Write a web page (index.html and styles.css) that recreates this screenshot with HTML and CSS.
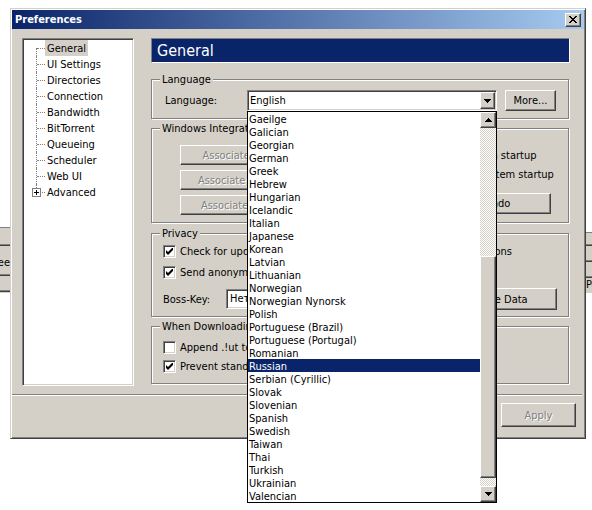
FILE: index.html
```html
<!DOCTYPE html>
<html lang="en">
<head>
  <meta charset="UTF-8">
  <title>Preferences</title>
  <link rel="stylesheet" href="styles.css">
</head>
<body>
  <div class="desktop">
    <!-- window behind the dialog, only its edges show -->
    <div class="bgwin">
      <div class="bg-left">
        <div class="bg-row bg-a"></div>
        <div class="bg-row bg-b"><span>Free</span></div>
        <div class="bg-row bg-c"></div>
      </div>
      <div class="bg-right">
        <div class="bg-row bg-ra"></div>
        <div class="bg-row bg-rb"></div>
        <div class="bg-row bg-rc"></div>
        <div class="bg-rd">Peers</div>
      </div>
    </div>

    <div class="dialog">
      <div class="titlebar">
        <span class="title">Preferences</span>
        <button class="btn close"><svg width="8" height="7" viewBox="0 0 8 7"><path d="M0 0h2v1h-2zM6 0h2v1h-2zM1 1h2v1h-2zM5 1h2v1h-2zM2 2h4v1h-4zM3 3h2v1h-2zM2 4h4v1h-4zM1 5h2v1h-2zM5 5h2v1h-2zM0 6h2v1h-2zM6 6h2v1h-2z" fill="#000"/></svg></button>
      </div>

      <div class="client">
        <div class="main">
          <ul class="tree">
            <li class="first"><span class="twig"></span><span class="tree-label sel">General</span></li>
            <li><span class="twig"></span><span class="tree-label">UI Settings</span></li>
            <li><span class="twig"></span><span class="tree-label">Directories</span></li>
            <li><span class="twig"></span><span class="tree-label">Connection</span></li>
            <li><span class="twig"></span><span class="tree-label">Bandwidth</span></li>
            <li><span class="twig"></span><span class="tree-label">BitTorrent</span></li>
            <li><span class="twig"></span><span class="tree-label">Queueing</span></li>
            <li><span class="twig"></span><span class="tree-label">Scheduler</span></li>
            <li><span class="twig"></span><span class="tree-label">Web UI</span></li>
            <li class="last"><span class="twig"><span class="plus"><svg width="7" height="7" viewBox="0 0 7 7"><path d="M1 3h5v1h-5zM3 1h1v5h-1z" fill="#000"/></svg></span></span><span class="tree-label">Advanced</span></li>
          </ul>

          <div class="panel">
            <div class="header">General</div>

            <div class="group g-lang">
              <div class="group-title">Language</div>
              <div class="lang-row">
                <span class="lang-label">Language:</span>
                <div class="combo">
                  <span class="combo-text">English</span>
                  <span class="btn combo-arrow"><svg width="7" height="4" viewBox="0 0 7 4"><path d="M0 0h7v1h-1v1h-1v1h-1v1h-1v-1h-1v-1h-1v-1h-1z" fill="#000"/></svg></span>
                  <div class="dropdown">
                    <ul class="options">
                      <li>Gaeilge</li>
                      <li>Galician</li>
                      <li>Georgian</li>
                      <li>German</li>
                      <li>Greek</li>
                      <li>Hebrew</li>
                      <li>Hungarian</li>
                      <li>Icelandic</li>
                      <li>Italian</li>
                      <li>Japanese</li>
                      <li>Korean</li>
                      <li>Latvian</li>
                      <li>Lithuanian</li>
                      <li>Norwegian</li>
                      <li>Norwegian Nynorsk</li>
                      <li>Polish</li>
                      <li>Portuguese (Brazil)</li>
                      <li>Portuguese (Portugal)</li>
                      <li>Romanian</li>
                      <li class="sel">Russian</li>
                      <li>Serbian (Cyrillic)</li>
                      <li>Slovak</li>
                      <li>Slovenian</li>
                      <li>Spanish</li>
                      <li>Swedish</li>
                      <li>Taiwan</li>
                      <li>Thai</li>
                      <li>Turkish</li>
                      <li>Ukrainian</li>
                      <li>Valencian</li>
                    </ul>
                    <div class="scrollbar">
                      <span class="btn sb-btn"><svg width="7" height="4" viewBox="0 0 7 4"><path d="M3 0h1v1h1v1h1v1h1v1h-7v-1h1v-1h1v-1h1z" fill="#000"/></svg></span>
                      <span class="sb-track sb-track-top"></span>
                      <span class="btn sb-thumb"></span>
                      <span class="sb-track sb-track-bot"></span>
                      <span class="btn sb-btn"><svg width="7" height="4" viewBox="0 0 7 4"><path d="M0 0h7v1h-1v1h-1v1h-1v1h-1v-1h-1v-1h-1v-1h-1z" fill="#000"/></svg></span>
                    </div>
                  </div>
                </div>
                <button class="btn more">More...</button>
              </div>
            </div>

            <div class="group g-win">
              <div class="group-title">Windows Integration</div>
              <div class="wi">
                <div class="wi-left">
                  <button class="btn off">Associate with .torrent files</button>
                  <button class="btn off">Associate with .btsearch files</button>
                  <button class="btn off">Associate with magnet URIs</button>
                </div>
                <div class="wi-right">
                  <label class="check-row"><span class="check"></span>Check association on startup</label>
                  <label class="check-row"><span class="check"></span>Start µTorrent on system startup</label>
                  <button class="btn undo">Install Undo</button>
                </div>
              </div>
            </div>

            <div class="group g-priv">
              <div class="group-title">Privacy</div>
              <div class="priv">
                <div class="priv-row">
                  <label class="check-row"><span class="check"><svg width="7" height="7" viewBox="0 0 7 7"><path d="M0 2L2 4L7-1V2L2 7L0 5Z" fill="#000"/></svg></span>Check for updates automatically</label>
                  <label class="check-row"><span class="check"></span>Update to beta versions</label>
                </div>
                <div class="priv-row">
                  <label class="check-row"><span class="check"><svg width="7" height="7" viewBox="0 0 7 7"><path d="M0 2L2 4L7-1V2L2 7L0 5Z" fill="#000"/></svg></span>Send anonymous information when checking for updates</label>
                </div>
                <div class="boss-row">
                  <span class="boss-label">Boss-Key:</span>
                  <span class="boss-input">Нет</span>
                  <button class="btn clear">Clear Private Data</button>
                </div>
              </div>
            </div>

            <div class="group g-dl">
              <div class="group-title">When Downloading</div>
              <div class="dl">
                <label class="check-row"><span class="check"></span>Append .!ut to incomplete files</label>
                <label class="check-row"><span class="check"><svg width="7" height="7" viewBox="0 0 7 7"><path d="M0 2L2 4L7-1V2L2 7L0 5Z" fill="#000"/></svg></span>Prevent standby if active torrents</label>
              </div>
            </div>
          </div>
        </div>

        <div class="separator"></div>

        <div class="actions">
          <button class="btn act">OK</button>
          <button class="btn act">Cancel</button>
          <button class="btn act off">Apply</button>
        </div>
      </div>
    </div>
  </div>
</body>
</html>
```

FILE: styles.css
```css
*{
  margin:0;
  padding:0;
  box-sizing:border-box;
}
body{
  background:#fff;
  font:11px "DejaVu Sans Condensed","DejaVu Sans",sans-serif;
  font-stretch:condensed;
  color:#000;
}
.desktop{
  position:relative;
  width:592px;
  height:510px;
  overflow:hidden;
}

/* window behind */
.bgwin{
  position:absolute;
  left:0;
  top:227px;
  width:592px;
  height:66px;
  z-index:0;
  display:flex;
  justify-content:space-between;
}
.bg-left{
  width:10px;
  background:#d4d0c8;
  border-top:1px solid #808080;
  display:flex;
  flex-direction:column;
}
.bg-row{
  border-bottom:1px solid #404040;
  box-shadow:inset 0 -1px #808080;
}
.bg-a{ height:18px; }
.bg-b{
  height:30px;
  display:flex;
  justify-content:flex-end;
  padding-top:10px;
  line-height:13px;
  overflow:hidden;
}
.bg-c{ height:16px; }
.bg-right{
  width:6px;
  margin-top:5px;
  background:#d4d0c8;
  border-top:1px solid #808080;
  display:flex;
  flex-direction:column;
}
.bg-ra{ height:13px; }
.bg-rb,.bg-rc{ height:16px; }
.bg-rd{
  line-height:14px;
  white-space:nowrap;
}

/* dialog */
.dialog{
  position:relative;
  z-index:1;
  width:576px;
  height:431px;
  margin:8px 0 0 10px;
  background:#d4d0c8;
  border:1px solid;
  border-color:#d4d0c8 #404040 #404040 #d4d0c8;
  box-shadow:inset 1px 1px #fff,inset -1px -1px #808080;
  padding:1px;
  display:flex;
  flex-direction:column;
}
.titlebar{
  height:19px;
  display:flex;
  align-items:center;
  padding:0 3px;
  background:linear-gradient(to right,#0a246a,#a6caf0);
  color:#fff;
  font-weight:bold;
}
.btn{
  background:#d4d0c8;
  border:1px solid;
  border-color:#fff #404040 #404040 #fff;
  box-shadow:inset -1px -1px #808080;
  font:inherit;
  color:#000;
  display:flex;
  align-items:center;
  justify-content:center;
  white-space:nowrap;
  overflow:hidden;
}
.btn.off{
  color:#808080;
  text-shadow:1px 1px #fff;
}
.close{
  margin-left:auto;
  width:16px;
  height:14px;
}

.client{
  flex:1;
  padding:9px 14px 0 10px;
  display:flex;
  flex-direction:column;
}
.main{
  display:flex;
  gap:17px;
  height:348px;
}

/* tree */
.tree{
  list-style:none;
  flex:none;
  width:112px;
  height:348px;
  background:#fff;
  border:1px solid;
  border-color:#808080 #fff #fff #808080;
  box-shadow:inset 1px 1px #404040,inset -1px -1px #d4d0c8;
  padding:1px;
}
.tree li{
  display:flex;
  align-items:center;
  height:16px;
}
.twig{
  position:relative;
  flex:none;
  width:21px;
  height:16px;
}
.twig::before{
  content:"";
  position:absolute;
  left:12px;
  top:0;
  bottom:0;
  border-left:1px dotted #808080;
}
.twig::after{
  content:"";
  position:absolute;
  left:13px;
  top:8px;
  width:8px;
  border-top:1px dotted #808080;
}
.first .twig::before{ top:8px; }
.last .twig::before{ bottom:12px; }
.plus{
  position:absolute;
  z-index:1;
  left:8px;
  top:4px;
  width:9px;
  height:9px;
  background:#fff;
  border:1px solid #808080;
  display:flex;
}
.tree-label{
  height:16px;
  padding:1px 2px 0;
  line-height:16px;
  white-space:nowrap;
}
.tree-label.sel{
  background:#d4d0c8;
}

/* right panel */
.panel{
  width:419px;
  display:flex;
  flex-direction:column;
}
.header{
  height:25px;
  background:#0a246a;
  border:1px solid;
  border-color:#808080 #fff #fff #808080;
  color:#fff;
  font-size:16px;
  line-height:23px;
  padding-left:5px;
}
.group{
  margin-right:1px;
  border:1px solid #808080;
  box-shadow:inset 1px 1px #fff,1px 1px #fff;
}
.group-title{
  width:fit-content;
  margin:-7px 0 0 8px;
  padding:0 2px;
  background:#d4d0c8;
  line-height:13px;
}
.g-lang{ margin-top:16px; height:40px; }
.g-win{ margin-top:9px; height:95px; }
.g-priv{ margin-top:10px; height:84px; }
.g-dl{ margin-top:9px; height:58px; }

.lang-row{
  display:flex;
  align-items:center;
  height:21px;
  margin-top:4px;
  padding-left:13px;
}
.lang-label{
  width:82px;
}
.combo{
  position:relative;
  width:250px;
  height:21px;
  background:#fff;
  border:1px solid;
  border-color:#808080 #fff #fff #808080;
  box-shadow:inset 1px 1px #404040,inset -1px -1px #d4d0c8;
  padding:1px;
  display:flex;
}
.combo-text{
  flex:1;
  line-height:17px;
  padding-left:1px;
}
.combo-arrow{
  width:15px;
  height:17px;
}
.more{
  margin-left:8px;
  width:51px;
  height:21px;
}

/* open list */
.dropdown{
  position:absolute;
  z-index:10;
  left:-1px;
  top:20px;
  width:250px;
  height:392px;
  background:#fff;
  border:1px solid #000;
  display:flex;
}
.options{
  flex:1;
  list-style:none;
}
.options li{
  height:13px;
  line-height:13px;
  padding:1px 0 0 1px;
  white-space:nowrap;
}
.options li.sel{
  background:#0a246a;
  color:#fff;
}
.scrollbar{
  width:16px;
  display:flex;
  flex-direction:column;
}
.sb-btn{
  height:16px;
  flex:none;
}
.sb-track{
  background:repeating-conic-gradient(#fff 0 25%,#d4d0c8 0 50%) 0 0/2px 2px;
}
.sb-track-top{ height:128px; flex:none; }
.sb-thumb{ height:222px; flex:none; }
.sb-track-bot{ flex:1; }

/* windows integration */
.wi{
  display:flex;
  margin-top:10px;
  padding-left:28px;
}
.wi-left{
  width:180px;
  display:flex;
  flex-direction:column;
  gap:5px;
}
.wi-left .btn{
  height:20px;
}
.wi-right{
  margin-left:16px;
  padding-top:1px;
  display:flex;
  flex-direction:column;
}
.undo{
  margin:9px 0 0 35px;
  width:140px;
  height:21px;
}

.check-row{
  display:flex;
  align-items:center;
  gap:4px;
  height:19px;
  white-space:nowrap;
}
.check{
  flex:none;
  width:13px;
  height:13px;
  background:#fff;
  border:1px solid;
  border-color:#808080 #fff #fff #808080;
  box-shadow:inset 1px 1px #404040,inset -1px -1px #d4d0c8;
  display:flex;
  align-items:center;
  justify-content:center;
}

/* privacy */
.priv{
  margin-top:1px;
  padding:0 11px;
}
.priv-row{
  display:flex;
  align-items:center;
  height:21px;
}
.priv-row .check-row:first-child{
  width:213px;
}
.boss-row{
  display:flex;
  align-items:center;
  height:22px;
  margin-top:5px;
}
.boss-label{
  width:63px;
}
.boss-input{
  width:100px;
  height:20px;
  background:#fff;
  border:1px solid;
  border-color:#808080 #fff #fff #808080;
  box-shadow:inset 1px 1px #404040,inset -1px -1px #d4d0c8;
  padding-left:3px;
  line-height:18px;
}
.clear{
  margin-left:auto;
  width:157px;
  height:22px;
  padding-left:8px;
}

.dl{
  margin-top:5px;
  padding-left:11px;
}

/* bottom */
.separator{
  margin:8px -12px 0 -10px;
  border-top:1px solid #808080;
  border-bottom:1px solid #fff;
}
.actions{
  display:flex;
  justify-content:flex-end;
  gap:5px;
  margin:7px -6px 0 0;
}
.act{
  width:75px;
  height:24px;
}
```
